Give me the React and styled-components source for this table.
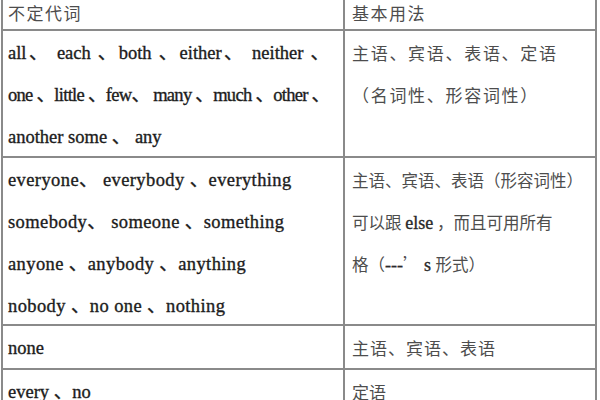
import React from 'react';
import styled, {createGlobalStyle} from 'styled-components';

const GlobalStyle = createGlobalStyle`
  html, body {
    margin: 0;
    padding: 0;
    background: #fff;
  }
  body {
    width: 600px;
    height: 400px;
    overflow: hidden;
  }
`;

const Grid = styled.div`
  display: grid;
  grid-template-columns: 344px 252px;
  grid-template-rows: 31px 127px 168px 44px 44px;
  margin-left: 1px;
  font-family: "Liberation Serif", "Noto Sans CJK SC", serif;
  color: #1c1c1c;
`;

const Cell = styled.div`
  box-sizing: border-box;
  border-right: 2px solid #8a8a8a;
  border-bottom: 2px solid #8a8a8a;
  border-left: ${props => props.first ? '2px solid #8a8a8a' : 'none'};
  padding: ${props => props.head ? '0' : '1px'} 6px 0 ${props => props.first ? 5 : 7}px;
  overflow: hidden;
`;

const Line = styled.div`
  font-size: 18.5px;
  line-height: 42px;
  height: 42px;
  white-space: nowrap;
  letter-spacing: ${props => props.spread || 0}px;
  -webkit-text-stroke: 0.35px #1c1c1c;
  text-align: ${props => props.justify ? 'justify' : 'left'};
  text-align-last: ${props => props.justify ? 'justify' : 'auto'};
  padding-right: ${props => props.justify ? 8 : 0}px;
`;

const Han = styled.div`
  font-family: "Noto Sans CJK SC", sans-serif;
  color: #4d4d4d;
  font-size: ${props => props.size || 16.5}px;
  line-height: ${props => props.lh || 42}px;
  height: ${props => props.lh || 42}px;
  letter-spacing: ${props => props.spread || 0}px;
  white-space: pre;
`;

const Latin = styled.span`
  font-family: "Liberation Serif", serif;
  font-size: 18px;
  color: #2a2a2a;
  -webkit-text-stroke: 0.35px #2a2a2a;
`;

export default function App() {
  return (
    <>
      <GlobalStyle />
      <Grid>
        <Cell head first><Han lh={25} size={17} spread={1.5}>不定代词</Han></Cell>
        <Cell head><Han lh={25} size={17} spread={1.5}>基本用法</Han></Cell>

        <Cell first>
          <Line justify>all、 each 、both 、either、 neither 、</Line>
          <Line justify spread={-0.7}>one 、little 、few、 many 、much 、other 、</Line>
          <Line>{'another some  、 any'}</Line>
        </Cell>
        <Cell>
          <Han size={17} spread={1.7}>主语、宾语、表语、定语</Han>
          <Han size={17} spread={1.7}>（名词性、形容词性）</Han>
        </Cell>

        <Cell first>
          <Line spread={0.4}>{'everyone、  everybody 、everything'}</Line>
          <Line spread={0.4}>{'somebody、  someone 、something'}</Line>
          <Line spread={0.4}>{'anyone 、anybody 、anything'}</Line>
          <Line spread={0.4}>{'nobody 、no one 、nothing'}</Line>
        </Cell>
        <Cell>
          <Han>主语、宾语、表语（形容词性）</Han>
          <Han>可以跟 <Latin>else</Latin> ，而且可用所有</Han>
          <Han>格（<Latin>---</Latin>’<Latin> s </Latin>形式）</Han>
        </Cell>

        <Cell first><Line>none</Line></Cell>
        <Cell><Han size={17} spread={1}>主语、宾语、表语</Han></Cell>

        <Cell first><Line>every 、no</Line></Cell>
        <Cell><Han size={17}>定语</Han></Cell>
      </Grid>
    </>
  );
}
